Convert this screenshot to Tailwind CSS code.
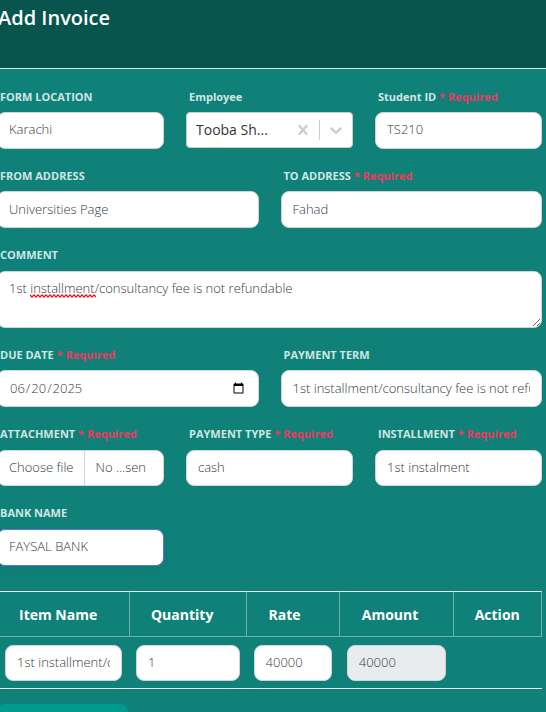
<!DOCTYPE html>
<html lang="en">
<head>
<meta charset="utf-8">
<meta name="viewport" content="width=device-width, initial-scale=1">
<title>Add Invoice</title>
<script src="https://cdn.jsdelivr.net/npm/@tailwindcss/browser@4"></script>
</head>
<body class="min-h-screen overflow-x-hidden bg-[#108178] font-['Open_Sans','Noto_Sans',sans-serif] text-[13px] text-[#343a40]">
<header class="-ml-[3px] border-b border-[#dbe9e7] bg-[#07554d] pt-1 pb-9">
  <h1 class="pl-px text-[20px] leading-7 font-semibold text-white">Add Invoice</h1>
</header>
<main class="-ml-[3px] pt-[18px] pr-1">
  <form class="flex flex-col gap-[17px]">
    <div class="grid grid-cols-3 gap-[22px]">
      <div>
        <label for="location" class="mb-[5px] block pl-[3px] text-[11px] leading-5 font-bold whitespace-nowrap text-[#cfe6e3]">FORM LOCATION</label>
        <input id="location" type="text" value="Karachi" class="block h-[37px] w-full rounded-lg border border-[#ced4da] bg-white px-[11px] pb-[3px] font-[340]">
      </div>
      <div>
        <label for="employee" class="mb-[5px] block pl-[3px] text-[11px] leading-5 font-bold whitespace-nowrap text-[#cfe6e3]">Employee</label>
        <div class="flex h-9 items-center rounded-sm border border-[#cccccc] bg-white">
          <select id="employee" class="h-full min-w-0 flex-1 appearance-none pl-[9px] text-sm text-[#333333]">
            <option>Tooba Sh...</option>
          </select>
          <button type="button" aria-label="Clear employee" class="px-1.5 text-[#cccccc]">
            <svg class="size-5" viewBox="0 0 20 20" fill="currentColor"><path d="M14.348 14.849c-0.469 0.469-1.229 0.469-1.697 0l-2.651-3.030-2.651 3.029c-0.469 0.469-1.229 0.469-1.697 0-0.469-0.469-0.469-1.229 0-1.697l2.758-3.15-2.759-3.152c-0.469-0.469-0.469-1.228 0-1.697s1.228-0.469 1.697 0l2.652 3.031 2.651-3.031c0.469-0.469 1.228-0.469 1.697 0s0.469 1.229 0 1.697l-2.758 3.152 2.758 3.15c0.469 0.469 0.469 1.229 0 1.698z"/></svg>
          </button>
          <span class="h-5 w-px bg-[#cccccc]"></span>
          <button type="button" aria-label="Open employee list" class="px-1.5 text-[#cccccc]">
            <svg class="size-5" viewBox="0 0 20 20" fill="currentColor"><path d="M4.516 7.548c0.436-0.446 1.043-0.481 1.576 0l3.908 3.747 3.908-3.747c0.533-0.481 1.141-0.446 1.574 0 0.436 0.445 0.408 1.197 0 1.615-0.406 0.418-4.695 4.502-4.695 4.502-0.217 0.223-0.502 0.335-0.787 0.335s-0.57-0.112-0.789-0.335c0 0-4.287-4.084-4.695-4.502s-0.436-1.17 0-1.615z"/></svg>
          </button>
        </div>
      </div>
      <div>
        <label for="student" class="mb-[5px] block pl-[3px] text-[11px] leading-5 font-bold whitespace-nowrap text-[#cfe6e3]">Student ID <span class="text-[#ea3a60]">* Required</span></label>
        <input id="student" type="text" value="TS210" class="block h-[37px] w-full rounded-lg border border-[#ced4da] bg-white px-[11px] pb-[3px] font-[340]">
      </div>
    </div>

    <div class="grid grid-cols-2 gap-[22px]">
      <div>
        <label for="from" class="mb-[5px] block pl-[3px] text-[11px] leading-5 font-bold whitespace-nowrap text-[#cfe6e3]">FROM ADDRESS</label>
        <input id="from" type="text" value="Universities Page" class="block h-[37px] w-full rounded-lg border border-[#ced4da] bg-white px-[11px] pb-0.5 font-[340]">
      </div>
      <div>
        <label for="to" class="mb-[5px] block pl-[3px] text-[11px] leading-5 font-bold whitespace-nowrap text-[#cfe6e3]">TO ADDRESS <span class="text-[#ea3a60]">* Required</span></label>
        <input id="to" type="text" value="Fahad" class="block h-[37px] w-full rounded-lg border border-[#ced4da] bg-white px-[11px] pb-0.5 font-[340]">
      </div>
    </div>

    <div>
      <label for="comment" class="mb-1.5 block pl-[3px] text-[11px] leading-5 font-bold whitespace-nowrap text-[#cfe6e3]">COMMENT</label>
      <div class="relative">
        <textarea id="comment" spellcheck="false" class="block h-[57px] w-full resize rounded-lg border border-[#ced4da] bg-white px-[11px] py-1.5 leading-5 font-[340]">1st installment/consultancy fee is not refundable</textarea>
        <svg aria-hidden="true" class="pointer-events-none absolute top-[23px] left-[33px] h-1 w-[66px]" viewBox="0 0 66 4" fill="none" stroke="#f0141e" stroke-width="1.3"><path d="M0 1l2 2l2-2l2 2l2-2l2 2l2-2l2 2l2-2l2 2l2-2l2 2l2-2l2 2l2-2l2 2l2-2l2 2l2-2l2 2l2-2l2 2l2-2l2 2l2-2l2 2l2-2l2 2l2-2l2 2l2-2l2 2l2-2l2 2"/></svg>
      </div>
    </div>

    <div class="grid grid-cols-2 gap-[22px]">
      <div>
        <label for="due" class="mb-[5px] block pl-[3px] text-[11px] leading-5 font-bold whitespace-nowrap text-[#cfe6e3]">DUE DATE <span class="text-[#ea3a60]">* Required</span></label>
        <input id="due" type="date" value="2025-06-20" class="block h-[37px] w-full rounded-lg border border-[#ced4da] bg-white px-[11px] font-[340]">
      </div>
      <div>
        <label for="term" class="mb-[5px] block pl-[3px] text-[11px] leading-5 font-bold whitespace-nowrap text-[#cfe6e3]">PAYMENT TERM</label>
        <input id="term" type="text" value="1st installment/consultancy fee is not refundable" class="block h-[37px] w-full rounded-lg border border-[#ced4da] bg-white px-[11px] pb-0.5 font-[340]">
      </div>
    </div>

    <div class="grid grid-cols-3 gap-[22px]">
      <div>
        <label for="attachment" class="mb-1.5 block pl-[3px] text-[11px] leading-5 font-bold whitespace-nowrap text-[#cfe6e3]">ATTACHMENT <span class="text-[#ea3a60]">* Required</span></label>
        <label class="flex h-9 items-center overflow-hidden rounded-lg border border-[#ced4da] bg-white font-[340] whitespace-nowrap">
          <input id="attachment" type="file" class="sr-only">
          <span class="flex h-full items-center border-r border-[#ced4da] pr-2.5 pl-[11px]">Choose file</span>
          <span class="pl-[11px]">No ...sen</span>
        </label>
      </div>
      <div>
        <label for="type" class="mb-1.5 block pl-[3px] text-[11px] leading-5 font-bold whitespace-nowrap text-[#cfe6e3]">PAYMENT TYPE <span class="text-[#ea3a60]">* Required</span></label>
        <input id="type" type="text" value="cash" class="block h-9 w-full rounded-lg border border-[#ced4da] bg-white px-[11px] pb-0.5 font-[340]">
      </div>
      <div>
        <label for="installment" class="mb-1.5 block pl-[3px] text-[11px] leading-5 font-bold whitespace-nowrap text-[#cfe6e3]">INSTALLMENT <span class="text-[#ea3a60]">* Required</span></label>
        <input id="installment" type="text" value="1st instalment" class="block h-9 w-full rounded-lg border border-[#ced4da] bg-white px-[11px] pb-0.5 font-[340]">
      </div>
    </div>

    <div class="grid grid-cols-3 gap-[22px]">
      <div>
        <label for="bank" class="mb-1.5 block pl-[3px] text-[11px] leading-5 font-bold whitespace-nowrap text-[#cfe6e3]">BANK NAME</label>
        <input id="bank" type="text" value="FAYSAL BANK" class="block h-[37px] w-full rounded-lg border border-[#5e72e4] bg-white px-[11px] pb-[3px] font-[340] shadow-[0_3px_9px_rgba(50,50,9,0.05)]">
      </div>
    </div>

    <div class="pt-2">
      <table class="w-full table-fixed border-separate border-spacing-0">
        <colgroup><col class="w-[24.4%]"><col class="w-[21.4%]"><col class="w-[17.1%]"><col class="w-[20.9%]"><col class="w-[16.2%]"></colgroup>
        <thead>
          <tr class="text-left text-sm text-white">
            <th class="h-[46px] border-t border-r border-b border-t-[#eaf4f3] border-r-[#6fb2ac] border-b-[#6fb2ac] pt-0.5 pl-[22px]">Item Name</th>
            <th class="border-t border-r border-b border-t-[#eaf4f3] border-r-[#6fb2ac] border-b-[#6fb2ac] pt-0.5 pl-[21px]">Quantity</th>
            <th class="border-t border-r border-b border-t-[#eaf4f3] border-r-[#6fb2ac] border-b-[#6fb2ac] pt-0.5 pl-[22px]">Rate</th>
            <th class="border-t border-r border-b border-t-[#eaf4f3] border-r-[#6fb2ac] border-b-[#6fb2ac] pt-0.5 pl-[22px]">Amount</th>
            <th class="border-t border-r border-b border-t-[#eaf4f3] border-r-[#6fb2ac] border-b-[#6fb2ac] pt-0.5 pl-[21px]">Action</th>
          </tr>
        </thead>
        <tbody>
          <tr>
            <td class="border-b border-[#eaf4f3] pt-2 pr-2 pb-[7px] pl-2"><input aria-label="Item Name" type="text" value="1st installment/consultancy fee" class="block h-9 w-full rounded-lg border border-[#ced4da] bg-white px-[11px] pb-0.5 font-[340]"></td>
            <td class="border-b border-[#eaf4f3] pt-2 pr-[7px] pb-[7px] pl-1.5"><input aria-label="Quantity" type="text" value="1" class="block h-9 w-full rounded-lg border border-[#ced4da] bg-white px-[11px] pb-0.5 font-[340]"></td>
            <td class="border-b border-[#eaf4f3] pt-2 pr-2 pb-[7px] pl-[7px]"><input aria-label="Rate" type="text" value="40000" class="block h-9 w-full rounded-lg border border-[#ced4da] bg-white px-[11px] pb-0.5 font-[340]"></td>
            <td class="border-b border-[#eaf4f3] pt-2 pr-2 pb-[7px] pl-[7px]"><input aria-label="Amount" type="text" value="40000" readonly class="block h-9 w-full rounded-lg border border-[#ced4da] bg-[#e9ecef] px-[11px] pb-0.5 font-[340]"></td>
            <td class="border-b border-[#eaf4f3]"></td>
          </tr>
        </tbody>
      </table>
    </div>
  </form>
</main>
<div class="-ml-[3px] h-[23px] overflow-hidden pt-[15px]">
  <button type="button" aria-label="Add item" class="block h-10 w-[131px] rounded-lg bg-[#009b8d]"></button>
</div>
</body>
</html>
